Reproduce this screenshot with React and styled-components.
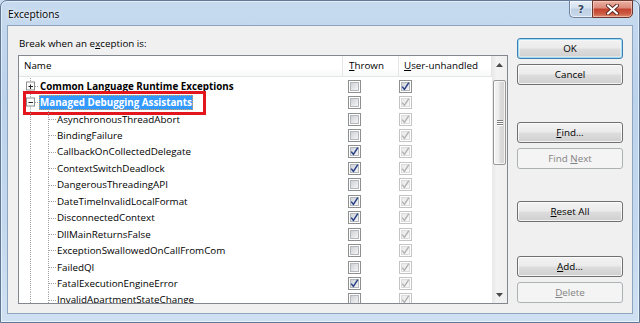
import React from 'react';
import styled, { createGlobalStyle, css } from 'styled-components';

const Global = createGlobalStyle`
  html, body { margin: 0; padding: 0; background: #c9dcf0; }
  body {
    width: 640px; height: 323px; overflow: hidden;
    font-family: "Open Sans", "Noto Sans", sans-serif;
    font-size: 9.8px; color: #000;
  }
  * { box-sizing: border-box; }
`;

const Window = styled.div`
  width: 640px; height: 323px;
  display: flex; flex-direction: column;
  background: linear-gradient(180deg, #c6daef 0%, #bcd3ec 30%, #c4d9ef 70%, #cfe0f2 100%);
  border: 1px solid #5f7896;
  border-radius: 7px 7px 0 0;
  box-shadow: inset 0 0 0 1px rgba(255,255,255,0.55);
  padding: 0 6px 8px 6px;
`;

const TitleBar = styled.div`
  height: 24px; flex: none;
  display: flex; align-items: flex-start;
`;

const Title = styled.div`
  margin: 6px 0 0 1px;
  font-size: 10.2px;
  line-height: 14px;
  color: #000;
  text-shadow: 0 0 6px rgba(255,255,255,0.9), 0 0 3px rgba(255,255,255,0.9);
  flex: 1;
`;

const CaptionBtn = styled.div`
  margin-top: -1px;
  height: 18px;
  display: flex; align-items: center; justify-content: center;
  border: 1px solid ${p => p.$close ? '#6a3630' : '#6c829f'};
  ${p => p.$close ? css`
    width: 41px;
    border-radius: 0 0 5px 0;
    background: linear-gradient(180deg, #ebb1a4 0%, #db8b7b 42%, #c3432f 52%, #cc5c45 80%, #dc8a6d 100%);
    box-shadow: inset 0 0 0 1px rgba(255,220,210,0.55);
  ` : css`
    width: 23px;
    border-right: none;
    border-radius: 0 0 0 5px;
    background: linear-gradient(180deg, #e6eef8 0%, #d5e2ef 42%, #bed0e4 52%, #c9d9ea 100%);
    box-shadow: inset 0 0 0 1px rgba(255,255,255,0.6);
  `}
`;

const HelpGlyph = styled.span`
  font-family: "DejaVu Sans", sans-serif;
  font-weight: bold;
  font-size: 11px;
  line-height: 1;
  color: #34475f;
  text-shadow: 0 0 2px #fff;
`;

const Client = styled.div`
  flex: 1;
  background: #f0f0f0;
  border: 1px solid #8fa4be;
  display: grid;
  grid-template-columns: 490px 106px;
  column-gap: 9px;
  padding-left: 10px;
  align-items: start;
`;

const LeftCol = styled.div`
  display: flex; flex-direction: column;
`;

const Prompt = styled.div`
  margin-top: 11px;
  height: 14px;
  line-height: 14px;
  margin-bottom: 4px;
  padding-left: 1px;
`;

const Acc = styled.span`
  text-decoration: underline;
  text-underline-offset: 1px;
`;

const ListBox = styled.div`
  height: 249px;
  border: 1px solid #828790;
  background: #fff;
  display: flex;
`;

const ListMain = styled.div`
  width: 473px;
  overflow: hidden;
  display: flex; flex-direction: column;
`;

const cols = '324px 56px 93px';

const Header = styled.div`
  height: 21px; flex: none;
  display: grid;
  grid-template-columns: ${cols};
  border-bottom: 1px solid #e5e5e5;
  background: linear-gradient(180deg, #ffffff 0%, #ffffff 60%, #f7f8f9 100%);
`;

const HeadCell = styled.div`
  line-height: 20px;
  padding-left: ${p => p.$pad}px;
  border-right: 1px solid #e5e5e5;
  white-space: nowrap;
`;

const Rows = styled.div`
  padding-top: 1px;
  display: flex; flex-direction: column;
`;

const Row = styled.div`
  position: relative;
  height: 16.45px; flex: none;
  display: grid;
  grid-template-columns: ${cols};
  align-items: center;
`;

const NameCell = styled.div`
  display: flex; align-items: center;
  height: 100%;
  white-space: nowrap;
`;

const Gutter = styled.svg`
  flex: none;
  display: block;
  height: 16.45px;
  overflow: visible;
`;

const NodeLabel = styled.span`
  height: 15px;
  line-height: 15px;
  padding: 0 1px;
  font-weight: ${p => p.$bold ? 700 : 400};
  ${p => p.$selected && css`
    background: #3399ff;
    color: #fff;
    outline: 1px dotted #d9a35a;
    outline-offset: -1px;
  `}
`;

const BoxCell = styled.div`
  padding-left: ${p => p.$pad}px;
  display: flex; align-items: center;
`;

const Annotation = styled.div`
  position: absolute;
  left: 4px; top: -3px;
  width: 183px; height: 24px;
  border: 3px solid #e3161e;
  pointer-events: none;
`;

const ScrollBar = styled.div`
  width: 15px;
  display: flex; flex-direction: column; align-items: center;
  background: linear-gradient(90deg, #e8e8e8 0%, #f2f2f2 30%, #f0f0f0 100%);
`;

const ArrowBtn = styled.div`
  height: 17px; flex: none; width: 100%;
  display: flex; align-items: center; justify-content: center;
`;

const Track = styled.div`
  flex: 1; width: 100%;
  display: flex; flex-direction: column; align-items: center;
`;

const Thumb = styled.div`
  margin-top: 7px;
  width: 13px; height: 85px;
  border: 1px solid #979797;
  border-radius: 2px;
  background: linear-gradient(90deg, #f5f5f5 0%, #ececec 45%, #dcdcdc 55%, #d4d4d4 100%);
  box-shadow: inset 0 0 0 1px rgba(255,255,255,0.7);
  display: flex; flex-direction: column; align-items: center; justify-content: center;
  gap: 1px;
`;

const Grip = styled.div`
  width: 6px; height: 1px;
  background: #7d7d7d;
  box-shadow: 0 1px 0 #fff;
`;

const RightCol = styled.div`
  padding-top: 12px;
  display: flex; flex-direction: column;
`;

const Button = styled.div`
  height: 21px;
  margin-top: ${p => p.$mt || 0}px;
  border: 1px solid #707070;
  border-radius: 3px;
  display: flex; align-items: center; justify-content: center;
  background: linear-gradient(180deg, #f2f2f2 0%, #ebebeb 48%, #dddddd 52%, #cfcfcf 100%);
  box-shadow: inset 0 0 0 1px rgba(255,255,255,0.75);
  white-space: nowrap;
  ${p => p.$default && css`
    border-color: #3c7fb1;
    box-shadow: inset 0 0 0 1px #9fdcf6, inset 0 0 0 2px rgba(255,255,255,0.4);
  `}
  ${p => p.$disabled && css`
    border-color: #adb2b5;
    background: #f4f4f4;
    box-shadow: none;
    color: #838383;
  `}
`;

const ButtonText = styled.span`
  white-space: pre;
`;

function Checkbox({ checked, disabled }) {
  const id = disabled ? 'cbd' : 'cbe';
  return (
    <svg width="13" height="13" viewBox="0 0 13 13" style={{ display: 'block' }}>
      <defs>
        <linearGradient id={id} x1="0" y1="0" x2="1" y2="1">
          <stop offset="0" stopColor={disabled ? '#e8e8e8' : '#cbcfd5'} />
          <stop offset="1" stopColor={disabled ? '#fafafa' : '#f7f7f7'} />
        </linearGradient>
      </defs>
      <rect x="0.5" y="0.5" width="12" height="12" fill="#fff" stroke={disabled ? '#c4c4c4' : '#8e8f8f'} />
      <rect x="2.5" y="2.5" width="8" height="8" fill={`url(#${id})`} stroke={disabled ? '#dcdcdc' : '#b4b8bd'} />
      {checked && (
        <path d="M3.2 6.6 L5.4 9.4 L9.8 2.6" fill="none"
          stroke={disabled ? '#b4b4b4' : '#263f86'} strokeWidth="1.5" strokeLinejoin="round" />
      )}
    </svg>
  );
}

const DOT = '#a0a0a0';

function RootGutter({ expanded }) {
  const c = 8;
  return (
    <Gutter width="20" viewBox="0 0 20 16.45">
      <line x1="11.5" y1="0" x2="11.5" y2="3.5" stroke={DOT} strokeDasharray="1 1" />
      <line x1="11.5" y1="12.5" x2="11.5" y2="16.45" stroke={DOT} strokeDasharray="1 1" />
      <line x1="16" y1={c + 0.5} x2="20" y2={c + 0.5} stroke={DOT} strokeDasharray="1 1" />
      <rect x="7.5" y={c - 4} width="8" height="8" fill="#fcfcfc" stroke="#8f8f8f" />
      <line x1="9.5" y1={c + 0.5} x2="14" y2={c + 0.5} stroke="#222" />
      {!expanded && <line x1="11.5" y1={c - 1.5} x2="11.5" y2={c + 3} stroke="#222" />}
    </Gutter>
  );
}

function ChildGutter() {
  const c = 8;
  return (
    <Gutter width="37" viewBox="0 0 37 16.45">
      <line x1="11.5" y1="0" x2="11.5" y2="16.45" stroke={DOT} strokeDasharray="1 1" />
      <line x1="29.5" y1="0" x2="29.5" y2="16.45" stroke={DOT} strokeDasharray="1 1" />
      <line x1="30" y1={c + 0.5} x2="37" y2={c + 0.5} stroke={DOT} strokeDasharray="1 1" />
    </Gutter>
  );
}

const roots = [
  { name: 'Common Language Runtime Exceptions', expanded: false, thrown: false, uu: true, uuDisabled: false },
  { name: 'Managed Debugging Assistants', expanded: true, thrown: false, uu: true, uuDisabled: true, selected: true },
];

const children = [
  ['AsynchronousThreadAbort', false],
  ['BindingFailure', false],
  ['CallbackOnCollectedDelegate', true],
  ['ContextSwitchDeadlock', true],
  ['DangerousThreadingAPI', false],
  ['DateTimeInvalidLocalFormat', true],
  ['DisconnectedContext', true],
  ['DllMainReturnsFalse', false],
  ['ExceptionSwallowedOnCallFromCom', false],
  ['FailedQI', false],
  ['FatalExecutionEngineError', true],
  ['InvalidApartmentStateChange', false],
];

function Arrow({ down }) {
  return (
    <svg width="7" height="4" viewBox="0 0 7 4" style={{ display: 'block' }}>
      <polygon points={down ? '0,0 7,0 3.5,4' : '0,4 7,4 3.5,0'} fill="#4a4a4a" />
    </svg>
  );
}

export default function App() {
  return (
    <>
      <Global />
      <Window>
        <TitleBar>
          <Title>Exceptions</Title>
          <CaptionBtn><HelpGlyph>?</HelpGlyph></CaptionBtn>
          <CaptionBtn $close>
            <svg width="13" height="11" viewBox="0 0 13 11">
              <path d="M2 1.5 L11 9.5 M11 1.5 L2 9.5" stroke="#5a2620" strokeWidth="4" strokeLinecap="round" />
              <path d="M2 1.5 L11 9.5 M11 1.5 L2 9.5" stroke="#fff" strokeWidth="2.2" strokeLinecap="round" />
            </svg>
          </CaptionBtn>
        </TitleBar>
        <Client>
          <LeftCol>
            <Prompt>Break when an e<Acc>x</Acc>ception is:</Prompt>
            <ListBox>
              <ListMain>
                <Header>
                  <HeadCell $pad={5}>Name</HeadCell>
                  <HeadCell $pad={6}><Acc>T</Acc>hrown</HeadCell>
                  <HeadCell $pad={5}><Acc>U</Acc>ser-unhandled</HeadCell>
                </Header>
                <Rows>
                  {roots.map(r => (
                    <Row key={r.name}>
                      <NameCell>
                        <RootGutter expanded={r.expanded} />
                        <NodeLabel $bold $selected={r.selected}>{r.name}</NodeLabel>
                      </NameCell>
                      <BoxCell $pad={5}><Checkbox checked={r.thrown} /></BoxCell>
                      <BoxCell $pad={0}><Checkbox checked={r.uu} disabled={r.uuDisabled} /></BoxCell>
                      {r.selected && <Annotation />}
                    </Row>
                  ))}
                  {children.map(([name, thrown]) => (
                    <Row key={name}>
                      <NameCell>
                        <ChildGutter />
                        <NodeLabel>{name}</NodeLabel>
                      </NameCell>
                      <BoxCell $pad={5}><Checkbox checked={thrown} /></BoxCell>
                      <BoxCell $pad={0}><Checkbox checked disabled /></BoxCell>
                    </Row>
                  ))}
                </Rows>
              </ListMain>
              <ScrollBar>
                <ArrowBtn><Arrow /></ArrowBtn>
                <Track>
                  <Thumb><Grip /><Grip /><Grip /></Thumb>
                </Track>
                <ArrowBtn><Arrow down /></ArrowBtn>
              </ScrollBar>
            </ListBox>
          </LeftCol>
          <RightCol>
            <Button $default><ButtonText>OK</ButtonText></Button>
            <Button $mt={5}><ButtonText>Cancel</ButtonText></Button>
            <Button $mt={37}><ButtonText><Acc>F</Acc>ind...</ButtonText></Button>
            <Button $mt={5} $disabled><ButtonText>Find <Acc>N</Acc>ext</ButtonText></Button>
            <Button $mt={32}><ButtonText><Acc>R</Acc>eset All</ButtonText></Button>
            <Button $mt={34}><ButtonText><Acc>A</Acc>dd...</ButtonText></Button>
            <Button $mt={5} $disabled><ButtonText><Acc>D</Acc>elete</ButtonText></Button>
          </RightCol>
        </Client>
      </Window>
    </>
  );
}
